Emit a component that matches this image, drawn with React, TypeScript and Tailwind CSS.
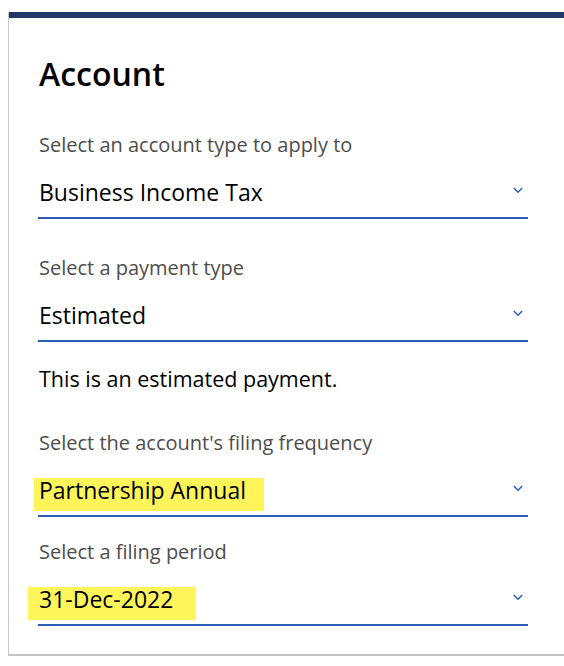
import { ReactNode } from "react"

function Chevron() {
  return (
    <svg width="10" height="7" viewBox="0 0 10 7" className="mt-[7px] mr-[5px] shrink-0">
      <path d="M0.8 1 L5 5.2 L9.2 1" fill="none" stroke="#2b5cb8" strokeWidth="1.5" />
    </svg>
  )
}

function Field({ label, value, mark }: { label: string; value: ReactNode; mark?: string }) {
  return (
    <div>
      <div className="pl-[1px] text-[20px] leading-[28px] text-[#4d4d4d]">{label}</div>
      <div className="mt-[21px] flex w-[490px] items-start justify-between border-b-2 border-[#2b5cb8] pb-[4px]">
        <span className={`h-[33px] pl-[1px] text-[23px] leading-[25px] text-black ${mark ?? ""}`}>{value}</span>
        <Chevron />
      </div>
    </div>
  )
}

export default function App() {
  return (
    <div className="min-h-[666px] bg-white pt-[12px] pl-[8px]" style={{ fontFamily: "'Open Sans', 'Noto Sans', sans-serif" }}>
      <div className="w-[570px] border-l border-b-2 border-l-[#c8c8c8] border-b-[#c4c4c4] bg-white">
        <div className="h-[6px] bg-[#213765]" />
        <div className="pl-[29px] pt-[36px] pb-[28px]">
          <h1 className="pl-[1px] text-[32px] leading-[40px] font-semibold text-black">Account</h1>
          <div className="mt-[37px] flex flex-col gap-[35px]">
            <Field label="Select an account type to apply to" value="Business Income Tax" />
            <Field label="Select a payment type" value="Estimated" />
          </div>
          <p className="mt-[23px] pl-[1px] text-[21.5px] leading-[28px] text-black">This is an estimated payment.</p>
          <div className="mt-[36px] flex flex-col gap-[21px]">
            <Field
              label="Select the account's filing frequency"
              value="Partnership Annual"
              mark="-ml-[4px] bg-[#fdf55a] pl-[5px] pr-[18px]"
            />
            <Field
              label="Select a filing period"
              value="31-Dec-2022"
              mark="-ml-[10px] bg-[#fdf55a] pl-[11px] pr-[23px]"
            />
          </div>
        </div>
      </div>
    </div>
  )
}
